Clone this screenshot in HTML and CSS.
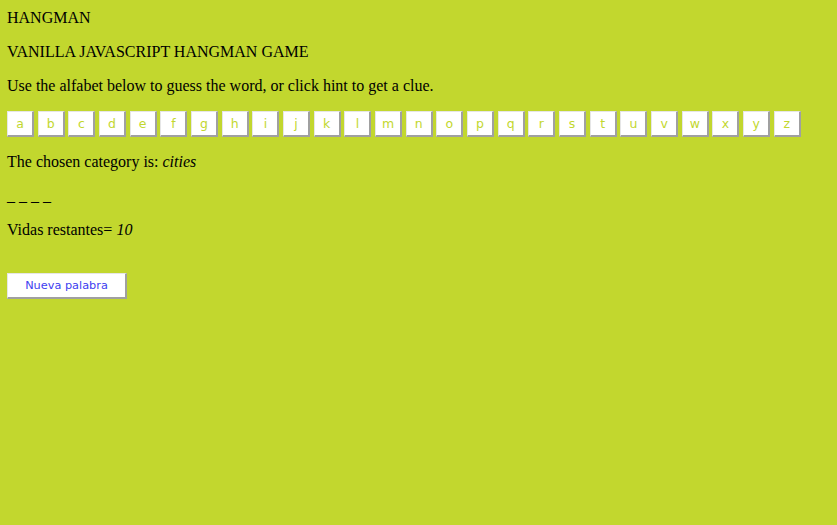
FILE: index.html
```html
<!DOCTYPE html>
<html>
<head>
<meta charset="utf-8">
<link rel="stylesheet" href="styles.css">
</head>
<body>
<div class="wrap">
  <div class="line">HANGMAN</div>
  <div class="line">VANILLA JAVASCRIPT HANGMAN GAME</div>
  <div class="line">Use the alfabet below to guess the word, or click hint to get a clue.</div>
  <div class="alphabet">
    <button class="key">a</button><button class="key">b</button><button class="key">c</button><button class="key">d</button><button class="key">e</button><button class="key">f</button><button class="key">g</button><button class="key">h</button><button class="key">i</button><button class="key">j</button><button class="key">k</button><button class="key">l</button><button class="key">m</button><button class="key">n</button><button class="key">o</button><button class="key">p</button><button class="key">q</button><button class="key">r</button><button class="key">s</button><button class="key">t</button><button class="key">u</button><button class="key">v</button><button class="key">w</button><button class="key">x</button><button class="key">y</button><button class="key">z</button>
  </div>
  <div class="line">The chosen category is: <em>cities</em></div>
  <div class="line">_ _ _ _</div>
  <div class="line">Vidas restantes= <em>10</em></div>
  <div class="actions">
    <button class="reset">Nueva palabra</button>
  </div>
</div>
</body>
</html>
```
FILE: styles.css
```css
html, body {
  margin: 0;
  padding: 0;
}
body {
  background: #c2d72e;
  color: #000;
  font-family: "Liberation Serif", "Times New Roman", serif;
  font-size: 16px;
  line-height: 18px;
}
.wrap {
  padding: 9px 7px;
}
.line {
  margin: 0 0 16px;
  height: 18px;
  white-space: nowrap;
}
.alphabet {
  display: flex;
  margin: 0 0 16px;
}
.key {
  width: 27px;
  height: 26px;
  margin-right: 3.68px;
  padding: 0;
  background: #fff;
  color: #c2d72e;
  font-family: "DejaVu Sans", Verdana, sans-serif;
  font-size: 12.5px;
  line-height: 20px;
  border-style: solid;
  border-width: 1px 2px 2px 1px;
  border-color: #e6e6e6 #a0a0a0 #a0a0a0 #e6e6e6;
  text-align: center;
  box-sizing: border-box;
}
.actions {
  padding-top: 18px;
}
.reset {
  width: 120px;
  height: 26px;
  padding: 0;
  background: #fff;
  color: #4040f0;
  font-family: "DejaVu Sans", Verdana, sans-serif;
  font-size: 11.3px;
  border-style: solid;
  border-width: 1px 2px 2px 1px;
  border-color: #e6e6e6 #a0a0a0 #a0a0a0 #e6e6e6;
  box-sizing: border-box;
}
```
